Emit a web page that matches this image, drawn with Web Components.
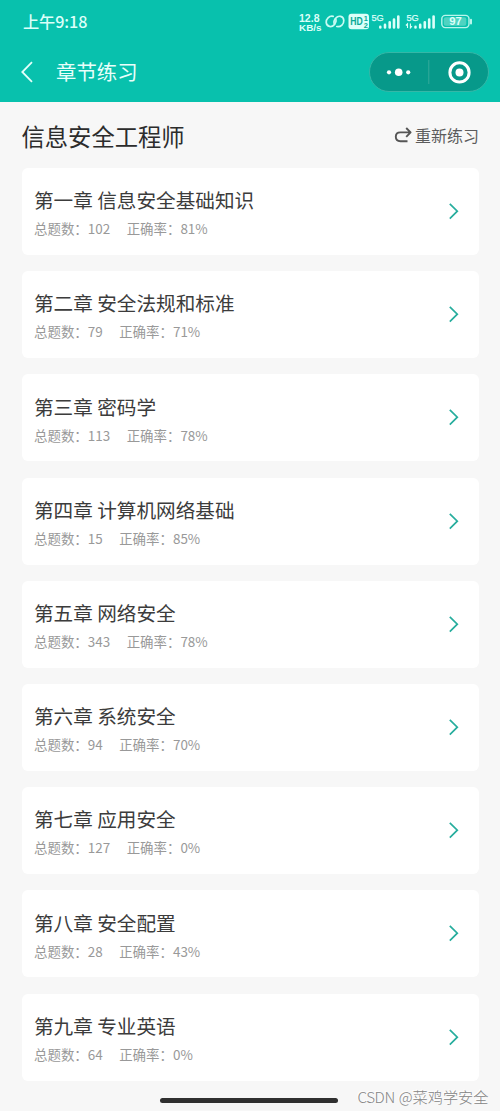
<!DOCTYPE html>
<html lang="zh-CN">
<head>
<meta charset="utf-8">
<title>章节练习</title>
<style>
html,body{margin:0;height:100%;overflow:hidden}
body{font-family:"Noto Sans CJK SC",sans-serif;background:#f7f7f7}
</style>
</head>
<body>
<practice-app></practice-app>
<script>
const define = (name, html) => customElements.define(name, class extends HTMLElement {
  constructor() {
    super();
    const t = document.createElement('template');
    t.innerHTML = html;
    this.attachShadow({mode: 'open'}).append(t.content.cloneNode(true));
  }
});

define('status-bar', `
<style>
:host{display:flex;height:42px;box-sizing:border-box;padding:0 27px 0 23px;justify-content:space-between;align-items:center;color:#dcfff9}
.time{font-size:16.2px;line-height:24px;font-weight:500;letter-spacing:-.1px;white-space:nowrap;margin-top:-1px}
svg{display:block;margin-top:2px}
text{font-family:"Liberation Sans",sans-serif;fill:#dcfff9}
</style>
<span class="time">上午9:18</span>
<svg width="174" height="24" viewBox="299 10 174 24">
  <text x="299" y="21.8" font-size="10.4" font-weight="700" textLength="20.5" lengthAdjust="spacingAndGlyphs">12.8</text>
  <text x="299" y="30.6" font-size="9.4" font-weight="700" textLength="22.5" lengthAdjust="spacingAndGlyphs">KB/s</text>
  <g fill="none" stroke="#c9fbf3" stroke-width="1.7" stroke-linecap="round">
    <path d="M333.2 16.3C329 15.5 326 19 326.2 22.4C326.6 27.2 331.8 27.6 334.3 24.6C335.7 22.8 336.9 20.6 335.4 18.6"/>
    <path transform="rotate(180 335 21.4)" d="M333.2 16.3C329 15.5 326 19 326.2 22.4C326.6 27.2 331.8 27.6 334.3 24.6C335.7 22.8 336.9 20.6 335.4 18.6"/>
  </g>
  <rect x="348.5" y="13.8" width="20.5" height="15.4" rx="3" fill="#dcfff9"/>
  <text x="350.2" y="25.3" font-size="10" font-weight="700" textLength="12.5" lengthAdjust="spacingAndGlyphs" style="fill:#08a997">HD</text>
  <text x="363.8" y="20.9" font-size="7.4" font-weight="700" style="fill:#08a997">1</text>
  <text x="363.8" y="28.2" font-size="7.4" font-weight="700" style="fill:#08a997">2</text>
  <text x="371.5" y="21" font-size="9.8" textLength="12.3" lengthAdjust="spacingAndGlyphs" stroke="#dcfff9" stroke-width=".25">5G</text>
  <text x="406.5" y="21" font-size="9.8" textLength="12.3" lengthAdjust="spacingAndGlyphs" stroke="#dcfff9" stroke-width=".25">5G</text>
  <g stroke="#dcfff9" stroke-width="2.6" stroke-linecap="round">
    <path d="M380.3 27.5v-.6M385 27.5v-2.6M389.7 27.5v-5.2M394 27.5v-8M398.3 27.5v-11"/>
    <path d="M415.5 27.5v-.6M420.2 27.5v-2.6M424.8 27.5v-5.2M429.2 27.5v-8M433.6 27.5v-11"/>
  </g>
  <path d="M407.5 28v-4.2l-1.6 1.7M410.4 23.6v4.2l1.6-1.7" fill="none" stroke="#dcfff9" stroke-width="1.1"/>
  <rect x="441.8" y="15.4" width="27.2" height="12.2" rx="3.5" fill="none" stroke="#b9f6ec" stroke-width="1.4"/>
  <rect x="443.8" y="17.3" width="22.5" height="8.4" rx="2" fill="#4fd3c1"/>
  <path d="M471 19.8v3.6" stroke="#b9f6ec" stroke-width="2" stroke-linecap="round"/>
  <text x="449.2" y="25.3" font-size="10.8" font-weight="700" textLength="12.6" lengthAdjust="spacingAndGlyphs">97</text>
</svg>`);

define('mini-capsule', `
<style>
:host{display:flex;box-sizing:border-box;width:120px;height:40px;border:1px solid #35b7a7;border-radius:20px;background:#07998a;align-items:center}
svg{display:block}
</style>
<svg width="118" height="38" viewBox="0 0 118 38" fill="#fff">
  <circle cx="19" cy="19.3" r="2.1"/><circle cx="28.7" cy="19.3" r="3.8"/><circle cx="38.2" cy="19.3" r="2.1"/>
  <path d="M58.8 7v24" stroke="#35aa9c"/>
  <circle cx="89.5" cy="19.4" r="9.6" fill="none" stroke="#fff" stroke-width="3"/><circle cx="89.5" cy="19.4" r="4"/>
</svg>`);

define('nav-bar', `
<style>
:host{display:flex;height:60px;box-sizing:border-box;padding:0 11px 0 20px;align-items:center;color:#e9fffb}
svg{display:block;flex:none}
h1{margin:-2px auto 0 21px;font-size:20.4px;line-height:30px;font-weight:400}
</style>
<svg width="15" height="24" viewBox="0 0 15 24"><path d="M12 2.2 2.3 12 12 21.8" fill="none" stroke="#e2fffa" stroke-width="1.8"/></svg>
<h1><slot></slot></h1>
<mini-capsule></mini-capsule>`);

define('section-head', `
<style>
:host{display:flex;height:66px;box-sizing:border-box;align-items:center;justify-content:space-between}
h2{margin:2px 0 0;font-size:23.3px;line-height:34px;font-weight:400;color:#2c2c2c}
.redo{display:flex;align-items:center;gap:3px;font-size:16px;line-height:24px;color:#5c5c5c}
svg{display:block}
</style>
<h2><slot></slot></h2>
<span class="redo"><svg width="18" height="18" viewBox="0 0 18 18"><path d="M13.5 15.2H6.4Q1.8 15.2 1.8 10.8T6.4 6.4H16M12.2 2l4.4 4.4-4.4 4.4" fill="none" stroke="#555" stroke-width="1.9" stroke-linejoin="round"/></svg><slot name="action"></slot></span>`);

define('chapter-card', `
<style>
:host{display:flex;box-sizing:border-box;height:87px;background:#fff;border-radius:6px;padding:0 19px 0 12.5px;align-items:center;justify-content:space-between}
.title{font-size:19.62px;line-height:28px;color:#3c3c3c;white-space:nowrap}
.meta{display:flex;gap:16.5px;font-size:13.45px;line-height:20px;color:#999;margin-top:4px;white-space:nowrap}
.body{padding-top:1.4px}
svg{display:block;margin-top:-1px}
</style>
<div class="body">
  <div class="title"><slot></slot></div>
  <div class="meta"><slot name="total"></slot><slot name="rate"></slot></div>
</div>
<svg width="12" height="18" viewBox="0 0 12 18"><path d="M1.8 1.8 9.3 9.2 1.8 16.6" fill="none" stroke="#26ad9d" stroke-width="1.7"/></svg>`);

define('home-indicator', `
<style>:host{display:block;width:178px;height:5px;border-radius:3px;background:#303030}</style>`);

define('water-mark', `
<style>
:host{display:flex;gap:4px;font:15.2px/22px "Noto Sans CJK SC",sans-serif;font-weight:300;color:#858585;white-space:nowrap;text-shadow:-1px -1px 0 #fff}
</style><slot name="brand"></slot><slot></slot>`);

const chapters = [
  ['第一章 信息安全基础知识', 102, 81], ['第二章 安全法规和标准', 79, 71],
  ['第三章 密码学', 113, 78], ['第四章 计算机网络基础', 15, 85],
  ['第五章 网络安全', 343, 78], ['第六章 系统安全', 94, 70],
  ['第七章 应用安全', 127, 0], ['第八章 安全配置', 28, 43],
  ['第九章 专业英语', 64, 0]
];

define('practice-app', `
<style>
:host{display:block;position:relative;width:500px;height:1111px;background:#f7f7f7;overflow:hidden}
header{background:#08c1ad;height:102px}
main{padding:0 21px 0 21.5px}
.list{display:flex;flex-direction:column;gap:16.2px}
home-indicator{position:absolute;left:160px;bottom:8.5px}
water-mark{position:absolute;right:11.5px;bottom:4px}
.brand{letter-spacing:-.4px}
</style>
<header><status-bar></status-bar><nav-bar>章节练习</nav-bar></header>
<main>
  <section-head>信息安全工程师<span slot="action">重新练习</span></section-head>
  <div class="list">${chapters.map(([title, total, rate]) =>
    `<chapter-card>${title}<span slot="total">总题数：${total}</span><span slot="rate">正确率：${rate}%</span></chapter-card>`).join('')}</div>
</main>
<home-indicator></home-indicator>
<water-mark><span slot="brand" class="brand">CSDN</span>@菜鸡学安全</water-mark>`);
</script>
</body>
</html>
